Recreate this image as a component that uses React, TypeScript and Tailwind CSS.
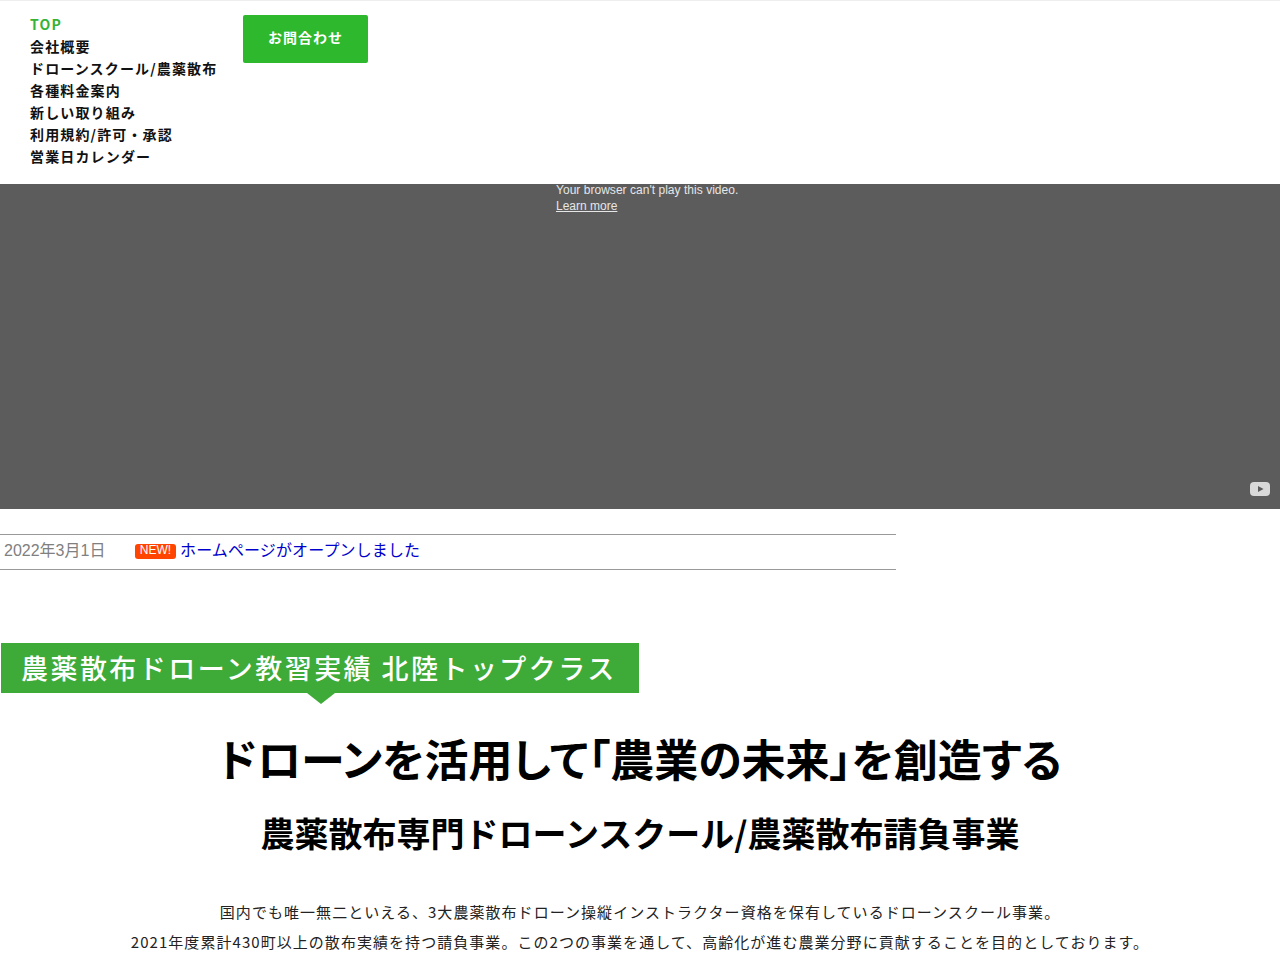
import React from "react";

const jp = "font-['Noto_Sans_CJK_JP','Noto_Sans',sans-serif]";

const navItems = [
  "会社概要",
  "ドローンスクール/農薬散布",
  "各種料金案内",
  "新しい取り組み",
  "利用規約/許可・承認",
  "営業日カレンダー",
];

const App: React.FC = () => {
  return (
    <div className={`w-[1280px] h-[960px] overflow-hidden bg-white text-black ${jp}`}>
      {/* header */}
      <header className="h-[184px] flex border-t border-[#eeeeee]">
        <ul className="ml-[30px] mt-[12px] w-[213px] text-[14px] leading-[22px] font-bold tracking-[1.15px] text-[#111111]">
          <li className="text-[#36b336]">TOP</li>
          {navItems.map((item) => (
            <li key={item} className="whitespace-nowrap">
              {item}
            </li>
          ))}
        </ul>
        <a className="mt-[14px] w-[125px] h-[48px] pb-[4px] flex items-center justify-center rounded-[2px] bg-[#2eb82e] text-white text-[14px] font-bold tracking-[1px]">
          お問合わせ
        </a>
      </header>

      {/* video */}
      <section className="relative h-[325px] bg-[#5c5c5c] pl-[556px] flex flex-col items-start font-['Liberation_Sans',sans-serif] text-[12px] leading-[16px] text-[#e6e6e6]">
        <p className="-mt-[2px] tracking-[0.03px]">Your browser can't play this video.</p>
        <a className="underline">Learn more</a>
        <svg className="absolute right-[9px] bottom-[12px]" width="22" height="16" viewBox="0 0 22 16">
          <rect x="1" y="1" width="20" height="14" rx="4" fill="#d9d9d9" />
          <path d="M9 5l5.5 3L9 11z" fill="#5c5c5c" />
        </svg>
      </section>

      {/* news */}
      <div className="mt-[25px] w-[896px] h-[36px] border-y border-[#999999] flex items-center font-['Liberation_Sans','Noto_Sans_CJK_JP',sans-serif] text-[16px] pb-[3px]">
        <span className="ml-[4px] w-[131px] text-[#808080]">2022年3月1日</span>
        <span className="mt-[2px] w-[41px] h-[15px] rounded-[3px] bg-[#ff4500] text-white text-[12px] leading-[13px] text-center">NEW!</span>
        <a className="ml-[4px] tracking-[0.13px] text-[#0000cc]">ホームページがオープンしました</a>
      </div>

      {/* banner */}
      <div className="relative mt-[73px] ml-px w-[638px] h-[50px] bg-[#3eaa38] flex items-center pl-[20px] text-white text-[27px] font-medium tracking-[2.45px] whitespace-nowrap">
        農薬散布ドローン教習実績 北陸トップクラス
        <svg className="absolute left-[306px] top-[50px]" width="28" height="11" viewBox="0 0 28 11">
          <path d="M0 0h28L14 11z" fill="#3eaa38" />
        </svg>
      </div>

      {/* copy */}
      <h1 className="mt-[35px] text-center text-[44px] leading-[60px] font-bold [font-feature-settings:'palt']">
        ドローンを活用して「農業の未来」を創造する
      </h1>
      <h2 className="mt-[22px] text-center text-[34px] leading-[46px] font-bold">
        農薬散布専門ドローンスクール/農薬散布請負事業
      </h2>
      <div className="mt-[41px] text-center text-[15px] leading-[30px] tracking-[1.05px] text-[#222222]">
        <p>国内でも唯一無二といえる、3大農薬散布ドローン操縦インストラクター資格を保有しているドローンスクール事業。</p>
        <p>2021年度累計430町以上の散布実績を持つ請負事業。この2つの事業を通して、高齢化が進む農業分野に貢献することを目的としております。</p>
      </div>
    </div>
  );
};

export default App;
